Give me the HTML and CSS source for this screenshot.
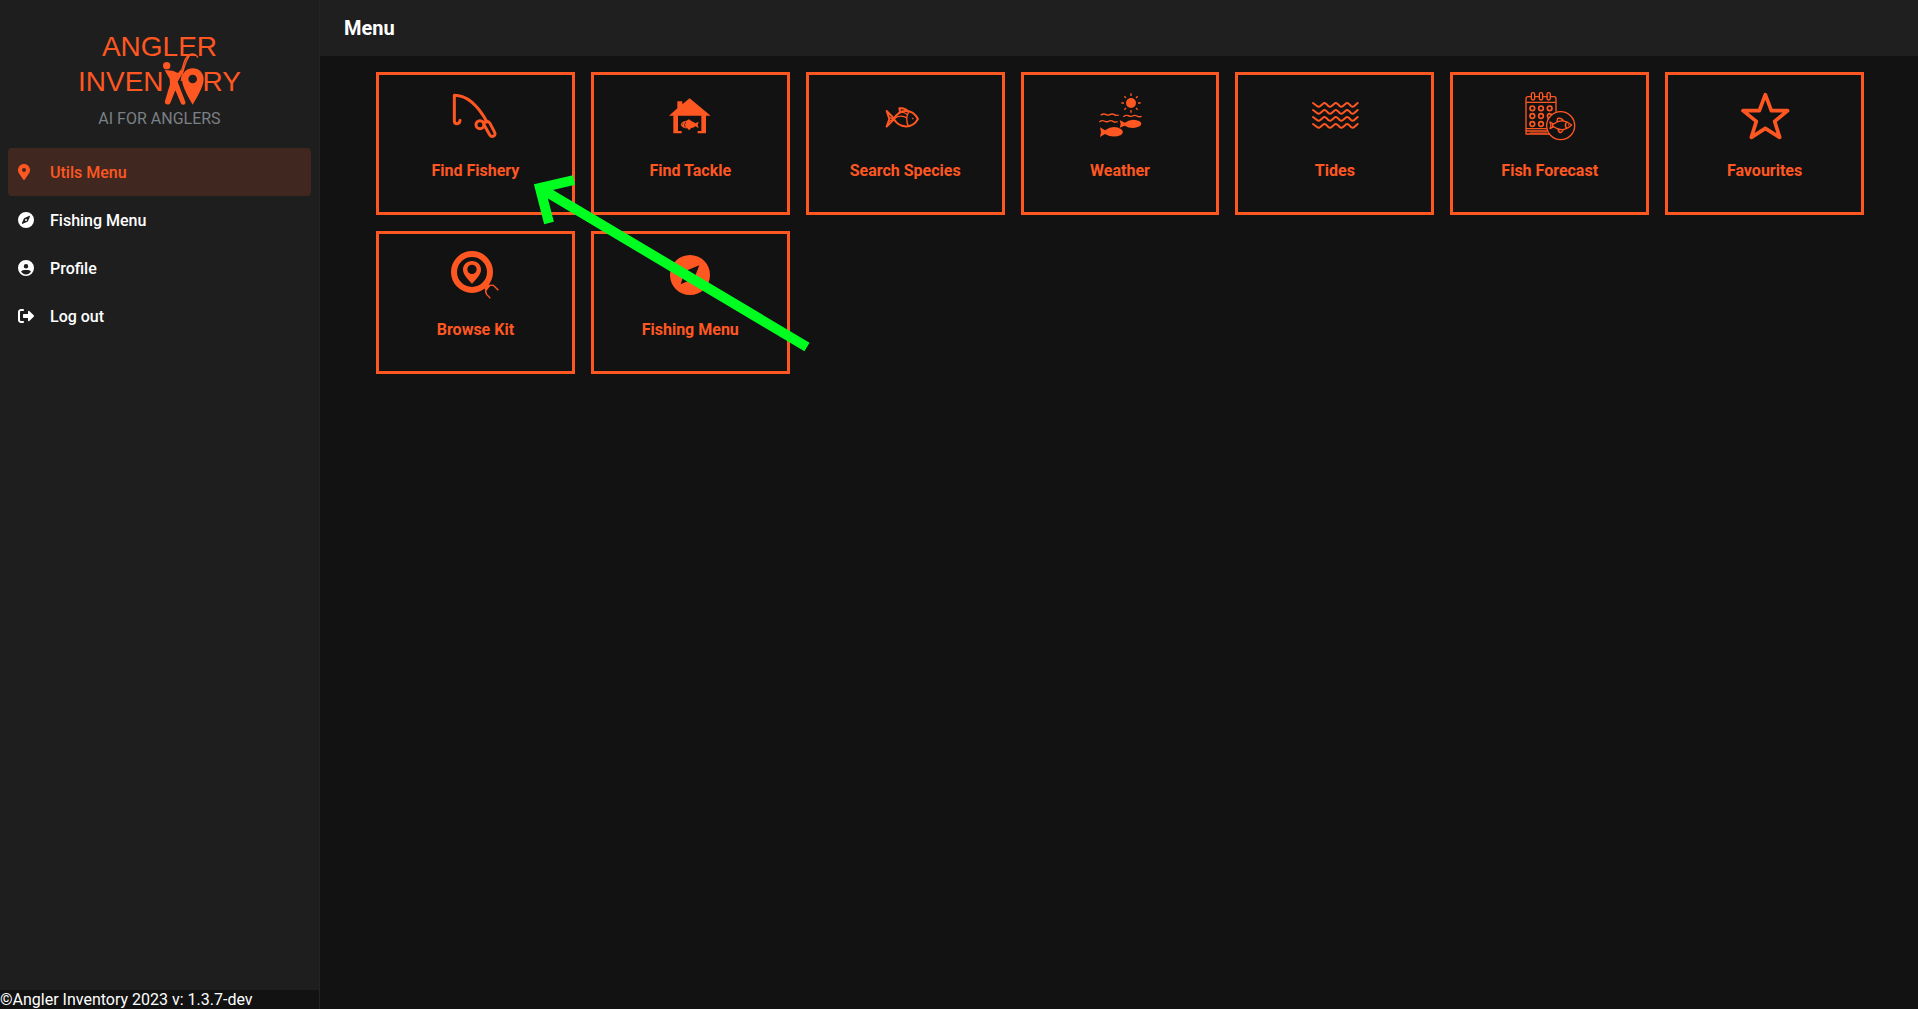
FILE: index.html
```
<!DOCTYPE html>
<html lang="en">

<head>
  <meta charset="UTF-8" />
  <meta name="viewport" content="width=device-width, initial-scale=1.0" />
  <title>Angler Inventory</title>
  <link rel="stylesheet" href="styles.css">
</head>

<body>
  <aside class="sidebar">
    <div class="brand">
      <div class="brand-line">ANGLER</div>
      <div class="brand-line">
        <span>INVEN</span>
        <svg class="brand-icon" viewBox="0 0 120 156" aria-hidden="true">
          <circle cx="8" cy="38" r="11" fill="currentColor" />
          <path d="M2 51 L26 53 L42 60 L50 50 L58 55 L47 76 L41 86 L64 146 Q66 154 58 155 Q52 156 50 149 L34 112 L19 150 Q16 156 8 154 Q1 152 3 144 L18 94 L17 78Z" fill="currentColor" />
          <path d="M46 71 C58 48 58 12 78 4 Q92 -1 102 14 M78 4 Q56 40 52 84" fill="none" stroke="currentColor" stroke-width="4" />
          <path fill-rule="evenodd" d="M86 46 C105 46 119 60 119 78 C119 101 100 130 86 155 C72 130 54 101 54 78 C54 60 68 46 86 46Z M86 65 A13 13 0 1 0 86 91 A13 13 0 1 0 86 65Z" fill="currentColor" />
        </svg>
        <span>RY</span>
      </div>
      <div class="tagline">AI FOR ANGLERS</div>
    </div>

    <nav class="nav">
      <a href="#utils" class="nav-item active">
        <svg viewBox="0 0 384 512"><path fill-rule="evenodd" d="M192 0C86 0 0 86 0 192c0 77 27 99 172 310 10 14 30 14 40 0 145-211 172-233 172-310C384 86 298 0 192 0z M192 128a64 64 0 1 1 0 128 64 64 0 0 1 0-128z" /></svg>
        <span>Utils Menu</span>
      </a>
      <a href="#fishing" class="nav-item">
        <svg viewBox="0 0 512 512"><path fill-rule="evenodd" d="M256 0a256 256 0 1 1 0 512 256 256 0 0 1 0-512z M380 154c7-19-9-36-30-30l-139 64c-10 4-18 12-22 22l-63 140c-8 19 10 36 29 29l142-66c9-4 16-11 20-20z M256 224a32 32 0 1 1 0 64 32 32 0 0 1 0-64z" /></svg>
        <span>Fishing Menu</span>
      </a>
      <a href="#profile" class="nav-item">
        <svg viewBox="0 0 512 512"><path fill-rule="evenodd" d="M256 0a256 256 0 1 1 0 512 256 256 0 0 1 0-512z M256 128a72 72 0 1 0 0 144 72 72 0 0 0 0-144z M98 379c39 50 95 85 158 85s119-35 158-85c-15-35-50-59-94-59H192c-44 0-79 24-94 59z" /></svg>
        <span>Profile</span>
      </a>
      <a href="#logout" class="nav-item">
        <svg viewBox="0 0 512 512"><path d="M160 416H96c-18 0-32-14-32-32V128c0-18 14-32 32-32h64c18 0 32-14 32-32s-14-32-32-32H96C43 32 0 75 0 128v256c0 53 43 96 96 96h64c18 0 32-14 32-32s-14-32-32-32z M503 234 361 95c-15-14-41-4-41 18v79H192c-18 0-32 14-32 32v64c0 18 14 32 32 32h128v79c0 22 26 32 41 18l142-139c12-12 12-32 0-44z" /></svg>
        <span>Log out</span>
      </a>
    </nav>

    <footer class="version">©Angler Inventory 2023 v: 1.3.7-dev</footer>
  </aside>

  <div class="page">
    <header class="topbar">
      <h1>Menu</h1>
    </header>

    <main class="tiles">
      <a href="#find-fishery" class="tile">
        <svg class="line" viewBox="0 0 144 144" stroke-width="9">
          <path d="M27 85 Q27 95 18 95 Q10 95 10 86 V10 Q64 10 108 90" />
          <circle cx="87" cy="98" r="12" />
          <path d="M99 98 C98 86 111 85 117 94 L131 121 C136 132 122 138 116 128Z" />
        </svg>
        <span>Find Fishery</span>
      </a>
      <a href="#find-tackle" class="tile">
        <svg viewBox="0 0 144 144">
          <path d="M71 19 134 71H120V124H95V117H106V71H36V117H47V124H22V71H9L34 49V28H49V37Z" />
          <path d="M44 98 Q48 87 60 87 L69 82 77 88 Q85 91 88 94 L98 89 95 99 98 108 88 103 Q83 108 76 108 L69 115 64 109 Q49 109 44 98Z" />
          <path d="M59 90 Q53 98 58 107 M47 96 H51" fill="none" stroke="#121212" stroke-width="2" />
        </svg>
        <span>Find Tackle</span>
      </a>
      <a href="#species" class="tile">
        <svg class="line" viewBox="0 0 144 144" stroke-width="6">
          <path d="M39 80 C55 52 92 47 111 81 C92 113 55 108 39 82 L17 104 L25 81 L17 57 L39 79" />
          <path d="M24 76 L38 81 24 88 M83 60 Q72 80 82 103 M54 61 Q68 58 80 68 M39 80 Q58 66 77 77" stroke-width="4" />
          <path d="M57 58 L55 49 Q72 46 81 58" />
          <circle cx="95" cy="80" r="1" stroke-width="3" />
        </svg>
        <span>Search Species</span>
      </a>
      <a href="#weather" class="tile">
        <svg viewBox="0 0 144 144">
          <circle cx="105" cy="33" r="15" />
          <path d="M105 4V12 M105 54V62 M76 33H84 M126 33H134 M85 13 90 18 M120 48 125 53 M85 53 90 48 M120 18 125 13 M14 70 Q22 64 29 67 Q35 71 41 68 Q49 64 55 68 Q61 72 69 69 M10 90 Q18 84 25 87 Q31 91 37 88 Q45 84 51 88 Q57 92 65 89 M82 74 Q90 68 97 71 Q103 75 109 72 Q117 68 123 72 Q129 76 137 73" fill="none" stroke="currentColor" stroke-width="4" />
          <path d="M12 106 L27 115 Q52 97 75 111 Q86 120 75 129 Q50 140 27 126 L12 135 15 121Z M71 84 L86 92 Q110 77 131 88 Q141 96 131 103 Q108 114 86 101 L71 107 74 96Z" />
        </svg>
        <span>Weather</span>
      </a>
      <a href="#tides" class="tile">
        <svg class="line" viewBox="0 0 144 144" stroke-width="6">
          <path d="M6 33 L18 42 Q23 46 28 42 L36 35 Q40 31 45 35 L52 42 Q57 46 62 42 L70 35 Q74 31 79 35 L86 42 Q91 46 96 42 L104 35 Q108 31 113 35 L120 42 Q125 46 130 42 L140 33" />
          <path d="M6 54 L18 63 Q23 67 28 63 L36 56 Q40 52 45 56 L52 63 Q57 67 62 63 L70 56 Q74 52 79 56 L86 63 Q91 67 96 63 L104 56 Q108 52 113 56 L120 63 Q125 67 130 63 L140 54" />
          <path d="M6 75 L18 84 Q23 88 28 84 L36 77 Q40 73 45 77 L52 84 Q57 88 62 84 L70 77 Q74 73 79 77 L86 84 Q91 88 96 84 L104 77 Q108 73 113 77 L120 84 Q125 88 130 84 L140 75" />
          <path d="M6 96 L18 105 Q23 109 28 105 L36 98 Q40 94 45 98 L52 105 Q57 109 62 105 L70 98 Q74 94 79 98 L86 105 Q91 109 96 105 L104 98 Q108 94 113 98 L120 105 Q125 109 130 105 L140 96" />
        </svg>
        <span>Tides</span>
      </a>
      <a href="#forecast" class="tile">
        <svg class="line" viewBox="0 0 144 144" stroke-width="4">
          <path d="M16 14H7Q0 14 0 20V126H70 M26 14H40 M50 14H63 M73 14H84Q90 14 90 20V58 M0 31H90 M0 110H61 M0 117H63" />
          <path d="M12 123H62" stroke-width="3" />
          <rect x="16" y="2" width="10" height="22" rx="5" />
          <rect x="40" y="2" width="10" height="22" rx="5" />
          <rect x="63" y="2" width="10" height="22" rx="5" />
          <g stroke-width="5">
            <circle cx="19" cy="49" r="7" /><circle cx="45" cy="49" r="7" /><circle cx="71" cy="49" r="7" />
            <circle cx="19" cy="72" r="7" /><circle cx="45" cy="72" r="7" /><path d="M66 78 Q61 66 71 65 L76 67" />
            <circle cx="19" cy="96" r="7" /><circle cx="45" cy="96" r="7" />
          </g>
          <circle cx="104" cy="101" r="42" />
          <path d="M83 96 Q108 76 137 99 Q110 124 83 104 L72 110 75 100 72 90Z M93 88 95 79 Q108 77 112 87 M96 112 Q98 122 105 122 L113 113 M121 91 Q115 100 121 109 M80 96V105" />
          <circle cx="127" cy="99" r="1" stroke-width="2" />
        </svg>
        <span>Fish Forecast</span>
      </a>
      <a href="#favourites" class="tile">
        <svg class="line" viewBox="0 0 144 144" stroke-width="11">
          <path d="M73 8 L91 56 H140 L101 88 L116 136 L73 109 L31 136 L46 88 L6 56 H55Z" />
        </svg>
        <span>Favourites</span>
      </a>
      <a href="#kit" class="tile">
        <svg viewBox="0 0 144 144">
          <circle cx="63" cy="63" r="54" fill="none" stroke="currentColor" stroke-width="18" />
          <path fill-rule="evenodd" d="M63 30 C79 30 90 41 90 56 C90 70 76 84 63 98 C50 84 36 70 36 56 C36 41 47 30 63 30Z M63 41 A14 14 0 1 0 63 69 A14 14 0 1 0 63 41Z" />
          <path d="M96 105 110 96 118 104 106 120Z" />
          <path d="M106 110 Q101 121 107 130 L118 142 M112 106 Q125 99 130 106 L142 118" fill="none" stroke="currentColor" stroke-width="4" />
        </svg>
        <span>Browse Kit</span>
      </a>
      <a href="#fishing" class="tile">
        <svg viewBox="0 0 144 144">
          <path fill-rule="evenodd" d="M72 12 A60 60 0 1 1 72 132 A60 60 0 1 1 72 12Z M100 43 56 61 44 100 85 82Z" />
        </svg>
        <span>Fishing Menu</span>
      </a>

      <svg class="pointer" viewBox="0 0 440 290" aria-hidden="true">
        <path d="M198 108 L164 116 L173 151 M164 116 L431 275" />
      </svg>
    </main>
  </div>
</body>

</html>
```
FILE: styles.css
```
* {
  box-sizing: border-box;
}

body {
  margin: 0;
  min-height: 100vh;
  display: flex;
  background-color: #121212;
  color: #fff;
  font-family: Roboto, sans-serif;
  font-size: 16px;
}

a {
  color: inherit;
  text-decoration: none;
}

.sidebar {
  width: 320px;
  flex-shrink: 0;
  display: flex;
  flex-direction: column;
  background-color: #1e1e1e;
  border-right: 1px solid #232323;
}

.brand {
  height: 148px;
  padding-top: 29px;
  display: flex;
  flex-direction: column;
  align-items: center;
  color: #ff5722;
}

.brand-line {
  display: flex;
  font-family: "Liberation Sans", Arial, sans-serif;
  font-size: 28px;
  line-height: 35px;
}

.brand-icon {
  width: 40px;
  height: 52px;
  margin: -11px -1px -6px 0;
  overflow: visible;
}

.tagline {
  line-height: 24px;
  margin-top: 8px;
  color: #7b8085;
}

.nav {
  flex: 1;
  padding: 0 8px;
}

.nav-item {
  display: flex;
  align-items: center;
  height: 48px;
  padding: 0 10px;
  border-radius: 4px;
  font-weight: 500;
}

.nav-item svg {
  flex: 0 0 auto;
  height: 16px;
  fill: currentColor;
}

.nav-item span {
  margin-left: 16px;
}

.nav-item.active {
  background-color: #40271f;
  color: #ff5722;
}

/* the pin is narrower, keep the labels on one line */
.nav-item.active span {
  margin-left: 20px;
}

.version {
  background-color: #121212;
  line-height: 19px;
}

.page {
  flex: 1;
  min-width: 0;
}

.topbar {
  height: 56px;
  padding: 0 24px;
  display: flex;
  align-items: center;
  background-color: #1f1f1f;
}

.topbar h1 {
  margin: 0;
  font-size: 20px;
  font-weight: 700;
}

.tiles {
  position: relative;
  display: grid;
  grid-template-columns: repeat(auto-fill, minmax(190px, 1fr));
  gap: 16px;
  margin: 16px 54px 16px 56px;
}

.tile {
  height: 143px;
  padding-top: 17px;
  display: flex;
  flex-direction: column;
  align-items: center;
  gap: 19px;
  border: 3px solid #ff5722;
  color: #ff5722;
  font-weight: 700;
  line-height: 24px;
}

.tile svg {
  width: 48px;
  height: 48px;
  overflow: visible;
  fill: currentColor;
}

.tile svg.line {
  fill: none;
  stroke: currentColor;
  stroke-linecap: round;
  stroke-linejoin: round;
}

.pointer {
  position: absolute;
  top: 0;
  left: 0;
  width: 440px;
  height: 290px;
  fill: none;
  stroke: #00ff21;
  stroke-width: 10;
  pointer-events: none;
}
```
